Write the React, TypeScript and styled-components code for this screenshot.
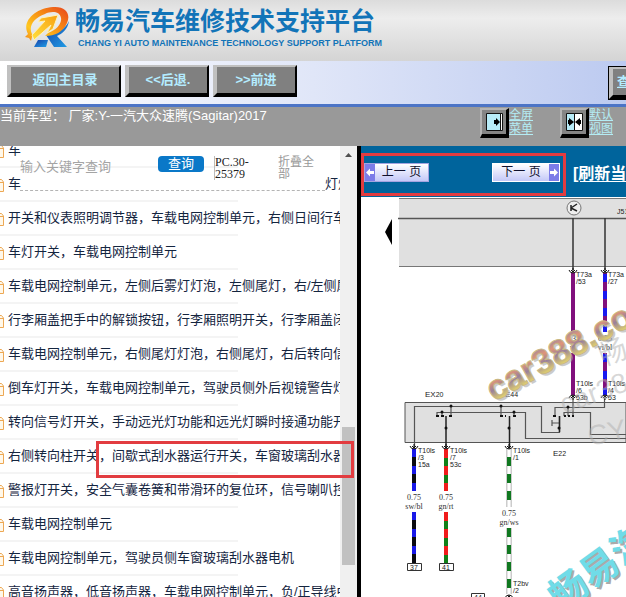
import React from "react";
import styled, { createGlobalStyle } from "styled-components";

const sans = `"Liberation Sans", "Noto Sans CJK SC", sans-serif`;

const GlobalStyle = createGlobalStyle`
  * { box-sizing: border-box; }
  body { margin: 0; font: 13px/16px ${sans}; }
  button, input { font-family: inherit; }
`;

const Page = styled.div`
  display: flex;
  flex-direction: column;
  height: 100vh;
  overflow: hidden;
`;

/* ---------- banner ---------- */

const Banner = styled.header`
  display: flex;
  flex: none;
  gap: 6px;
  height: 61px;
  padding: 6px 0 0 24px;
  background: linear-gradient(#dcdcdc, #ededed 30%, #d4d4d4);
`;

const Brand = styled.div`
  color: #1274b8;
  white-space: nowrap;
`;

const BrandTitle = styled.h1`
  margin: 0;
  font-size: 25px;
  line-height: 31px;
  font-weight: 700;
`;

const BrandSubtitle = styled.p`
  margin: 0;
  padding-left: 3px;
  font-size: 9px;
  line-height: 12px;
  font-weight: 700;
`;

/* ---------- toolbar ---------- */

const Toolbar = styled.nav`
  display: flex;
  flex: none;
  gap: 4px;
  height: 46px;
  padding: 4px 0 0 7px;
  overflow: hidden;
  border-bottom: 3px solid #4c74c6;
  background: linear-gradient(90deg, #ffffff 0, #e0e6f8 50%, #bccaf0 100%);
`;

const BevelButton = styled.button<{ $width: number; $edge?: boolean }>`
  flex: none;
  width: ${(p) => p.$width}px;
  height: 32px;
  padding: 0;
  border: solid;
  border-width: 2px 2px 4px 4px;
  border-color: #c0c0c0 #000 #000 #c0c0c0;
  background: #808080;
  color: #b4ecff;
  font-size: 13px;
  font-weight: 700;
  line-height: 20px;
  white-space: nowrap;
  ${(p) =>
    p.$edge &&
    `margin: 2px -67px 0 auto; outline: 1px solid #000; text-align: left; padding-left: 4px; text-decoration: underline;`}
`;

/* ---------- vehicle bar ---------- */

const VehicleBar = styled.div`
  display: flex;
  flex: none;
  height: 39px;
  padding-right: 13px;
  background: #999;
  color: #fff;
`;

const VehicleText = styled.p`
  flex: 1;
  margin: 0;
  white-space: pre;
  line-height: 17px;
`;

const ViewLink = styled.a`
  display: flex;
  flex: none;
  margin: 1px 0 0 27px;
  color: #b4ecf4;
  font-size: 12px;
  line-height: 14px;
`;

const ViewIcon = styled.span`
  display: grid;
  place-items: center;
  width: 29px;
  height: 30px;
  border: solid;
  border-width: 2px 3px 4px 2px;
  border-color: #b4b4b4 #000 #000 #b4b4b4;
  background: #858585;
`;

const ViewLabel = styled.span`
  width: 24px;
  text-decoration: underline;
`;

/* ---------- panes ---------- */

const Panes = styled.main`
  display: flex;
  flex: 1;
  min-height: 0;
`;

const ListPane = styled.section`
  position: relative;
  display: flex;
  flex: 0 0 361px;
  overflow: hidden;
  background: #fff;
  border-right: 4px solid #333;
  border-image: linear-gradient(90deg, #777, #555 40%, #000 80%) 1;
  border-width: 0 4px 0 0;
`;

const ListView = styled.div`
  flex: 1;
  min-width: 0;
  overflow: hidden;
`;

const List = styled.ul`
  margin: -12px 0 0;
  padding: 0;
  list-style: none;
`;

const Item = styled.li`
  width: 238px;
  height: 34px;
  border-bottom: 2px solid #f4f4f4;
`;

const ItemLink = styled.a`
  display: flex;
  align-items: center;
  gap: 4px;
  width: max-content;
  height: 32px;
  color: #14253f;
  text-decoration: none;
  white-space: nowrap;
`;

const ItemTail = styled.span`
  padding-left: 300px;
`;

const SearchForm = styled.form`
  position: absolute;
  top: 3px;
  left: 20px;
  display: flex;
  align-items: flex-start;
  width: 305px;
  height: 42px;
  padding-top: 7px;
  border-bottom: 1px dashed #b4b4b4;
`;

const SearchInput = styled.input`
  width: 138px;
  height: 20px;
  padding: 0;
  border: 0;
  background: transparent;
  font-size: 13px;
  &::placeholder { color: #a4a4a4; opacity: 1; }
`;

const SearchButton = styled.button`
  width: 46px;
  height: 16px;
  padding: 0;
  border: 0;
  border-radius: 4px;
  background: #0a78c8;
  color: #fff;
  font-size: 13px;
  line-height: 16px;
`;

const SearchCode = styled.span`
  width: 36px;
  margin-left: 10px;
  border-left: 1px solid #bbb;
  color: #222;
  font: 12px/12px "Liberation Serif", serif;
`;

const CollapseButton = styled.button`
  width: 37px;
  margin-left: 28px;
  padding: 0;
  border: 0;
  background: none;
  color: #999;
  font-size: 12px;
  line-height: 12px;
  text-align: left;
`;

const ScrollTrack = styled.div`
  display: flex;
  flex: none;
  flex-direction: column;
  align-items: center;
  width: 17px;
  background: #f0f0f0;
`;

const ScrollThumb = styled.div`
  width: 13px;
  height: 138px;
  margin-top: 270px;
  background: #c1c1c1;
`;

const Marker = styled.div<{ $top: number; $left: number; $w: number; $h: number }>`
  position: absolute;
  top: ${(p) => p.$top}px;
  left: ${(p) => p.$left}px;
  width: ${(p) => p.$w}px;
  height: ${(p) => p.$h}px;
  border: 3px solid #e23c40;
  pointer-events: none;
`;

const DiagramPane = styled.section`
  display: flex;
  flex: 1;
  flex-direction: column;
  min-width: 0;
  overflow: hidden;
  background: #fff;
`;

const Pager = styled.div`
  position: relative;
  display: flex;
  flex: none;
  height: 51px;
  padding: 17px 0 0 3px;
  background: #00649c;
`;

const PageButton = styled.button<{ $next?: boolean }>`
  display: flex;
  flex: none;
  flex-direction: ${(p) => (p.$next ? "row-reverse" : "row")};
  width: ${(p) => (p.$next ? 68 : 65)}px;
  height: 19px;
  margin-left: ${(p) => (p.$next ? 63 : 0)}px;
  padding: 0;
  border: 1px solid ${(p) => (p.$next ? "#fff" : "#a4a4e0")};
  background: linear-gradient(#fff, #c4c8f8);
  color: #10102c;
`;

const PageLabel = styled.span`
  flex: 1;
  font-size: 12px;
  line-height: 17px;
  white-space: pre;
`;

const RefreshLink = styled.a`
  margin-left: 13px;
  color: #fff;
  font-size: 16px;
  line-height: 22px;
  font-weight: 700;
  white-space: nowrap;
  text-decoration: underline;
  text-underline-offset: 2px;
`;

const DiagramSvg = styled.svg`
  display: block;
  flex: none;
  font-family: "Liberation Sans", "Noto Sans CJK SC", sans-serif;
`;

/* ---------- drawings ---------- */

const Logo = () => (
  <svg width="45" height="42" viewBox="0 0 45 42" aria-hidden="true">
    <defs>
      <linearGradient id="sun" x1="1" y1="0" x2="0" y2="1">
        <stop offset="0" stopColor="#e8441c" />
        <stop offset=".4" stopColor="#f68a14" />
        <stop offset=".75" stopColor="#ffc820" />
        <stop offset="1" stopColor="#f08018" />
      </linearGradient>
      <linearGradient id="glow" x1="1" y1="0" x2="0" y2="1">
        <stop offset="0" stopColor="#f8a010" />
        <stop offset="1" stopColor="#ffe040" />
      </linearGradient>
      <linearGradient id="sky" x1="0" y1="0" x2="1" y2="1">
        <stop offset="0" stopColor="#1640a8" />
        <stop offset="1" stopColor="#20a0e8" />
      </linearGradient>
    </defs>
    <path d="M45 15C44 23 38 28 33 30L43 41H30L22 29C34 28 42 22 45 15Z" fill="url(#sky)" />
    <path d="M14 34H24L22 41H10Z" fill="url(#sky)" />
    <path d="M4 28C-3 15 12 2 29 1C42 0 47 8 43 17C39 26 31 30 21 30L24 27C33 24 38 17 37 12C36 5 27 5 21 8C10 12 4 20 8 28L11 30L8 31L7 35L5 32L1 31Z" fill="url(#sun)" />
    <path d="M34 9L17 12L14 16L21 15L8 29L10 34L27 19L23 27L29 23Z" fill="url(#glow)" stroke="#fff3b8" strokeWidth="1" />
  </svg>
);

const FullIcon = () => (
  <svg width="17" height="18" viewBox="0 0 17 18" aria-hidden="true">
    <path d="M.5.5h16v17H.5z" fill="#b8ecf8" stroke="#111" />
    <path d="M14 1h2v16h-2z" fill="#fff" />
    <path d="M14.500 1v16" stroke="#111" />
    <path d="M8 7h2V5l4 4-4 4v-2H8z" fill="#000" />
  </svg>
);

const SplitIcon = () => (
  <svg width="17" height="18" viewBox="0 0 17 18" aria-hidden="true">
    <path d="M.5.5h16v17H.5z" fill="#fff" stroke="#111" />
    <path d="M1 1h7v16H1z" fill="#b8ecf8" />
    <path d="M8.500 1v16" stroke="#111" />
    <path d="M2 7h1V5l5 4-5 4v-2H2zM15 7h-1V5L9 9l5 4v-2h1z" fill="#000" />
  </svg>
);

const FileIcon = () => (
  <svg width="4" height="16" viewBox="0 0 4 16" aria-hidden="true">
    <path d="M0 3.500H1.500L3.500 6V15.500H0M0 6.500H3" fill="#fff8ea" stroke="#eda854" />
  </svg>
);

const PageArrow = ({ next }: { next?: boolean }) => (
  <svg width="10" height="17" viewBox="0 0 10 17" aria-hidden="true">
    <path d="M0 0h10v17H0z" fill="#7c7ce8" />
    <path
      d="M1 8.500L5 4.500V7H9V10H5V12.500Z"
      fill="#fff"
      transform={next ? "rotate(180 5 8.500)" : undefined}
    />
  </svg>
);

type WireProps = { x: number; from: number; to: number; base: string; dash?: string; offset?: number };

const Wire = ({ x, from, to, base, dash, offset = 0 }: WireProps) => (
  <g strokeWidth="4">
    {base === "#fff" && <path d={`M${x - 2} ${from}V${to}M${x + 2} ${from}V${to}`} stroke="#999" strokeWidth="1" />}
    <path d={`M${x} ${from}V${to}`} stroke={base} strokeWidth={base === "#fff" ? 3 : 4} />
    {dash && (
      <path d={`M${x} ${from}V${to}`} stroke={dash} strokeDasharray="9 8" strokeDashoffset={offset} />
    )}
  </g>
);

const Plug = ({ x, y, up }: { x: number; y: number; up?: boolean }) => (
  <g transform={`translate(${x} ${y})${up ? " scale(1 -1)" : ""}`} fill="none" stroke="#111">
    <path d="M-4 -1Q-3 2 0 2Q3 2 4 -1" />
    <path d="M0 -3V2M-2 -1L0 1L2 -1" />
  </g>
);

const Diagram = () => (
  <DiagramSvg width="265" height="400" viewBox="361 197 265 400" role="img" aria-label="电路图">
    <defs>
      <linearGradient id="mark" x1="0" y1="0" x2="0" y2="1">
        <stop offset=".1" stopColor="#8c88a8" />
        <stop offset=".35" stopColor="#e09478" />
        <stop offset=".55" stopColor="#98809c" />
        <stop offset=".8" stopColor="#dccc70" />
      </linearGradient>
    </defs>
    <path d="M399 198H626V266H399Z" fill="#e0e0e0" />
    <path d="M399 198.500H626M399 266.500H626" stroke="#777" />
    <path d="M398 218.500H626" stroke="#555" strokeWidth="1.500" />
    <path d="M392 219V245L385 232Z" fill="#000" />
    <circle cx="574" cy="208" r="7" fill="#eee" stroke="#777" />
    <path d="M571 205V211M571 208L577 204M571 208L577 211" stroke="#222" strokeWidth="1.500" />
    <path d="M573 218V270M605 218V270" stroke="#333" strokeWidth="1.500" />

    <path d="M405 402.500H626V442.500H405Z" fill="#e0e0e0" stroke="#555" />
    <g fill="none" stroke="#555" strokeWidth="1.200">
      <path d="M414.500 447V406.500H541.500V432.500H559.500V416" />
      <path d="M437 416V412.500H525.500V438.500H626" />
      <path d="M451 406V416M501 406V416M514 416V412M442 412V416" />
      <path d="M555 416V407.500H604.500V398M568 407V416" />
      <path d="M564 416V412.500H590.500V434.500H626" />
      <path d="M573 398V416M552 420V426M552 423H559" />
    </g>
    <path d="M446 416V448M509.500 416V448M559.500 416V432" stroke="#222" strokeWidth="1.500" />
    <path d="M436 416h3M441 416h3M449 416h3M500 416h3M505 416h1M513 416h3M553 416h3M564 416h2M568 416h2M572 416h2" stroke="#111" strokeWidth="2" />
    <g fill="#111">
      {[[451, 406], [442, 412], [446, 428], [501, 406], [514, 412], [509, 428], [568, 407], [559, 428]].map(([x, y]) => (
        <circle key={`${x}-${y}`} cx={x} cy={y} r="1.500" />
      ))}
    </g>

    <Wire x={573} from={273} to={332} base="#80107c" />
    <Wire x={573} from={353} to={395} base="#80107c" />
    <Wire x={605} from={273} to={332} base="#1818f0" dash="#80107c" offset={8} />
    <Wire x={605} from={353} to={395} base="#1818f0" dash="#80107c" offset={8} />
    <Wire x={414} from={449} to={491} base="#1818e8" dash="#0a0a10" offset={9} />
    <Wire x={414} from={512} to={564} base="#1818e8" dash="#0a0a10" offset={9} />
    <Wire x={446} from={449} to={491} base="#108018" dash="#f01c1c" />
    <Wire x={446} from={512} to={564} base="#108018" dash="#f01c1c" />
    <Wire x={509} from={449} to={507} base="#fff" dash="#107820" offset={9} />
    <Wire x={509} from={528} to={594} base="#fff" dash="#107820" />
    <Plug x={573} y={271} />
    <Plug x={605} y={271} />
    <Plug x={573} y={397} up />
    <Plug x={605} y={397} up />
    <Plug x={414} y={447} />
    <Plug x={446} y={447} />
    <Plug x={509} y={447} />
    <Plug x={509} y={597} up />
    <path d="M407.500 563.500h14v7h-14zM439.500 563.500h14v7h-14zM471.500 593.500h13v7h-13z" fill="#fff" stroke="#333" />

    <g fontSize="7" fill="#222">
      <text x="576" y="277">T73a</text><text x="576" y="284">/53</text>
      <text x="608" y="277">T73a</text><text x="608" y="284">/27</text>
      <text x="576" y="386">T10ls</text><text x="576" y="393">/6</text><text x="576" y="400">53b</text>
      <text x="608" y="386">T10ls</text><text x="608" y="393">/4</text><text x="608" y="400">53</text>
      <text x="418" y="453">T10ls</text><text x="418" y="460">/3</text><text x="418" y="467">15a</text>
      <text x="450" y="453">T10ls</text><text x="450" y="460">/7</text><text x="450" y="467">53c</text>
      <text x="513" y="453">T10ls</text><text x="513" y="460">/1</text>
      <text x="513" y="586">T2bv</text><text x="513" y="593">/2</text>
      <text x="617" y="214">J519</text>
      <text x="410" y="570">37</text><text x="442" y="570">41</text><text x="474" y="600">44</text>
      <text x="425" y="397" fontSize="8">EX<tspan fontSize="7">20</tspan></text>
      <text x="505" y="397" fontSize="8">E<tspan fontSize="7">44</tspan></text>
      <text x="553" y="456" fontSize="8">E<tspan fontSize="7">22</tspan></text>
    </g>
    <g fontSize="8" fill="#333" textAnchor="middle" fontFamily="Liberation Serif, serif">
      <text x="414" y="500">0.75</text><text x="414" y="509">sw/bl</text>
      <text x="446" y="500">0.75</text><text x="446" y="509">gn/rt</text>
      <text x="509" y="516">0.75</text><text x="509" y="525">gn/ws</text>
      <text x="573" y="341">0.35</text><text x="573" y="350">vi</text>
      <text x="605" y="341">0.35</text><text x="605" y="350">vi/bl</text>
    </g>

    <g fill="#b0b0b0" fillOpacity=".5">
      <text x="603" y="366" fontSize="28" transform="rotate(-20 603 366)">畅易</text>
      <text x="564" y="414" fontSize="28" transform="rotate(-20 564 414)">car388</text>
      <text x="590" y="446" fontSize="28" transform="rotate(-12 590 446)">CYR</text>
    </g>
    <g fontSize="35" fontWeight="700">
      <text x="496" y="404" transform="rotate(-29 496 404)" fill="#aaa" opacity=".6">car388.com</text>
      <text x="494" y="402" transform="rotate(-29 494 402)" fill="url(#mark)" stroke="#c8b884" strokeWidth="1">car388.com</text>
    </g>
    <g fontSize="38" fontWeight="700">
      <text x="563" y="614" transform="rotate(-36 563 614)" fill="#aaa">畅易汽车</text>
      <text x="561" y="612" transform="rotate(-36 561 612)" fill="#70dce8">畅易汽车</text>
    </g>
  </DiagramSvg>
);

/* ---------- content ---------- */

const items: { text: string; tail?: string }[] = [
  { text: "车" },
  { text: "车", tail: "灯灯" },
  { text: "开关和仪表照明调节器，车载电网控制单元，右侧日间行车" },
  { text: "车灯开关，车载电网控制单元" },
  { text: "车载电网控制单元，左侧后雾灯灯泡，左侧尾灯，右/左侧尾" },
  { text: "行李厢盖把手中的解锁按钮，行李厢照明开关，行李厢盖闭" },
  { text: "车载电网控制单元，右侧尾灯灯泡，右侧尾灯，右后转向信" },
  { text: "倒车灯开关，车载电网控制单元，驾驶员侧外后视镜警告灯" },
  { text: "转向信号灯开关，手动远光灯功能和远光灯瞬时接通功能开" },
  { text: "右侧转向柱开关，间歇式刮水器运行开关，车窗玻璃刮水器" },
  { text: "警报灯开关，安全气囊卷簧和带滑环的复位环，信号喇叭控" },
  { text: "车载电网控制单元" },
  { text: "车载电网控制单元，驾驶员侧车窗玻璃刮水器电机" },
  { text: "高音扬声器，低音扬声器，车载电网控制单元，负/正导线中" },
];

export default function App() {
  return (
    <Page>
      <GlobalStyle />
      <Banner>
        <Logo />
        <Brand>
          <BrandTitle>畅易汽车维修技术支持平台</BrandTitle>
          <BrandSubtitle>CHANG YI AUTO MAINTENANCE TECHNOLOGY SUPPORT PLATFORM</BrandSubtitle>
        </Brand>
      </Banner>
      <Toolbar>
        <BevelButton $width={114}>返回主目录</BevelButton>
        <BevelButton $width={84}>&lt;&lt;后退.</BevelButton>
        <BevelButton $width={84}>&gt;&gt;前进</BevelButton>
        <BevelButton $width={84} $edge>查</BevelButton>
      </Toolbar>
      <VehicleBar>
        <VehicleText>当前车型： 厂家:Y-一汽大众速腾(Sagitar)2017</VehicleText>
        <ViewLink href="#full">
          <ViewIcon><FullIcon /></ViewIcon>
          <ViewLabel>全屏菜单</ViewLabel>
        </ViewLink>
        <ViewLink href="#default">
          <ViewIcon><SplitIcon /></ViewIcon>
          <ViewLabel>默认视图</ViewLabel>
        </ViewLink>
      </VehicleBar>
      <Panes>
        <ListPane>
          <ListView>
            <List>
              {items.map((item, i) => (
                <Item key={i}>
                  <ItemLink href={`#item-${i}`}>
                    <FileIcon />
                    {item.text}
                    {item.tail && <ItemTail>{item.tail}</ItemTail>}
                  </ItemLink>
                </Item>
              ))}
            </List>
          </ListView>
          <ScrollTrack>
            <svg width="17" height="11" viewBox="0 0 17 11" aria-hidden="true">
              <path d="M5 11L8.500 7L12 11Z" fill="#505050" />
            </svg>
            <ScrollThumb />
          </ScrollTrack>
          <SearchForm onSubmit={(e) => e.preventDefault()}>
            <SearchInput aria-label="输入关键字查询" placeholder="输入关键字查询" />
            <SearchButton type="submit">查询</SearchButton>
            <SearchCode>PC.30-25379</SearchCode>
            <CollapseButton type="button">折叠全部</CollapseButton>
          </SearchForm>
          <Marker $top={295} $left={96} $w={258} $h={37} />
        </ListPane>
        <DiagramPane>
          <Pager>
            <PageButton><PageArrow /><PageLabel>上一 页</PageLabel></PageButton>
            <PageButton $next><PageArrow next /><PageLabel>下一 页</PageLabel></PageButton>
            <RefreshLink href="#refresh">[刷新当前页]</RefreshLink>
            <Marker $top={7} $left={0} $w={205} $h={43} />
          </Pager>
          <Diagram />
        </DiagramPane>
      </Panes>
    </Page>
  );
}
